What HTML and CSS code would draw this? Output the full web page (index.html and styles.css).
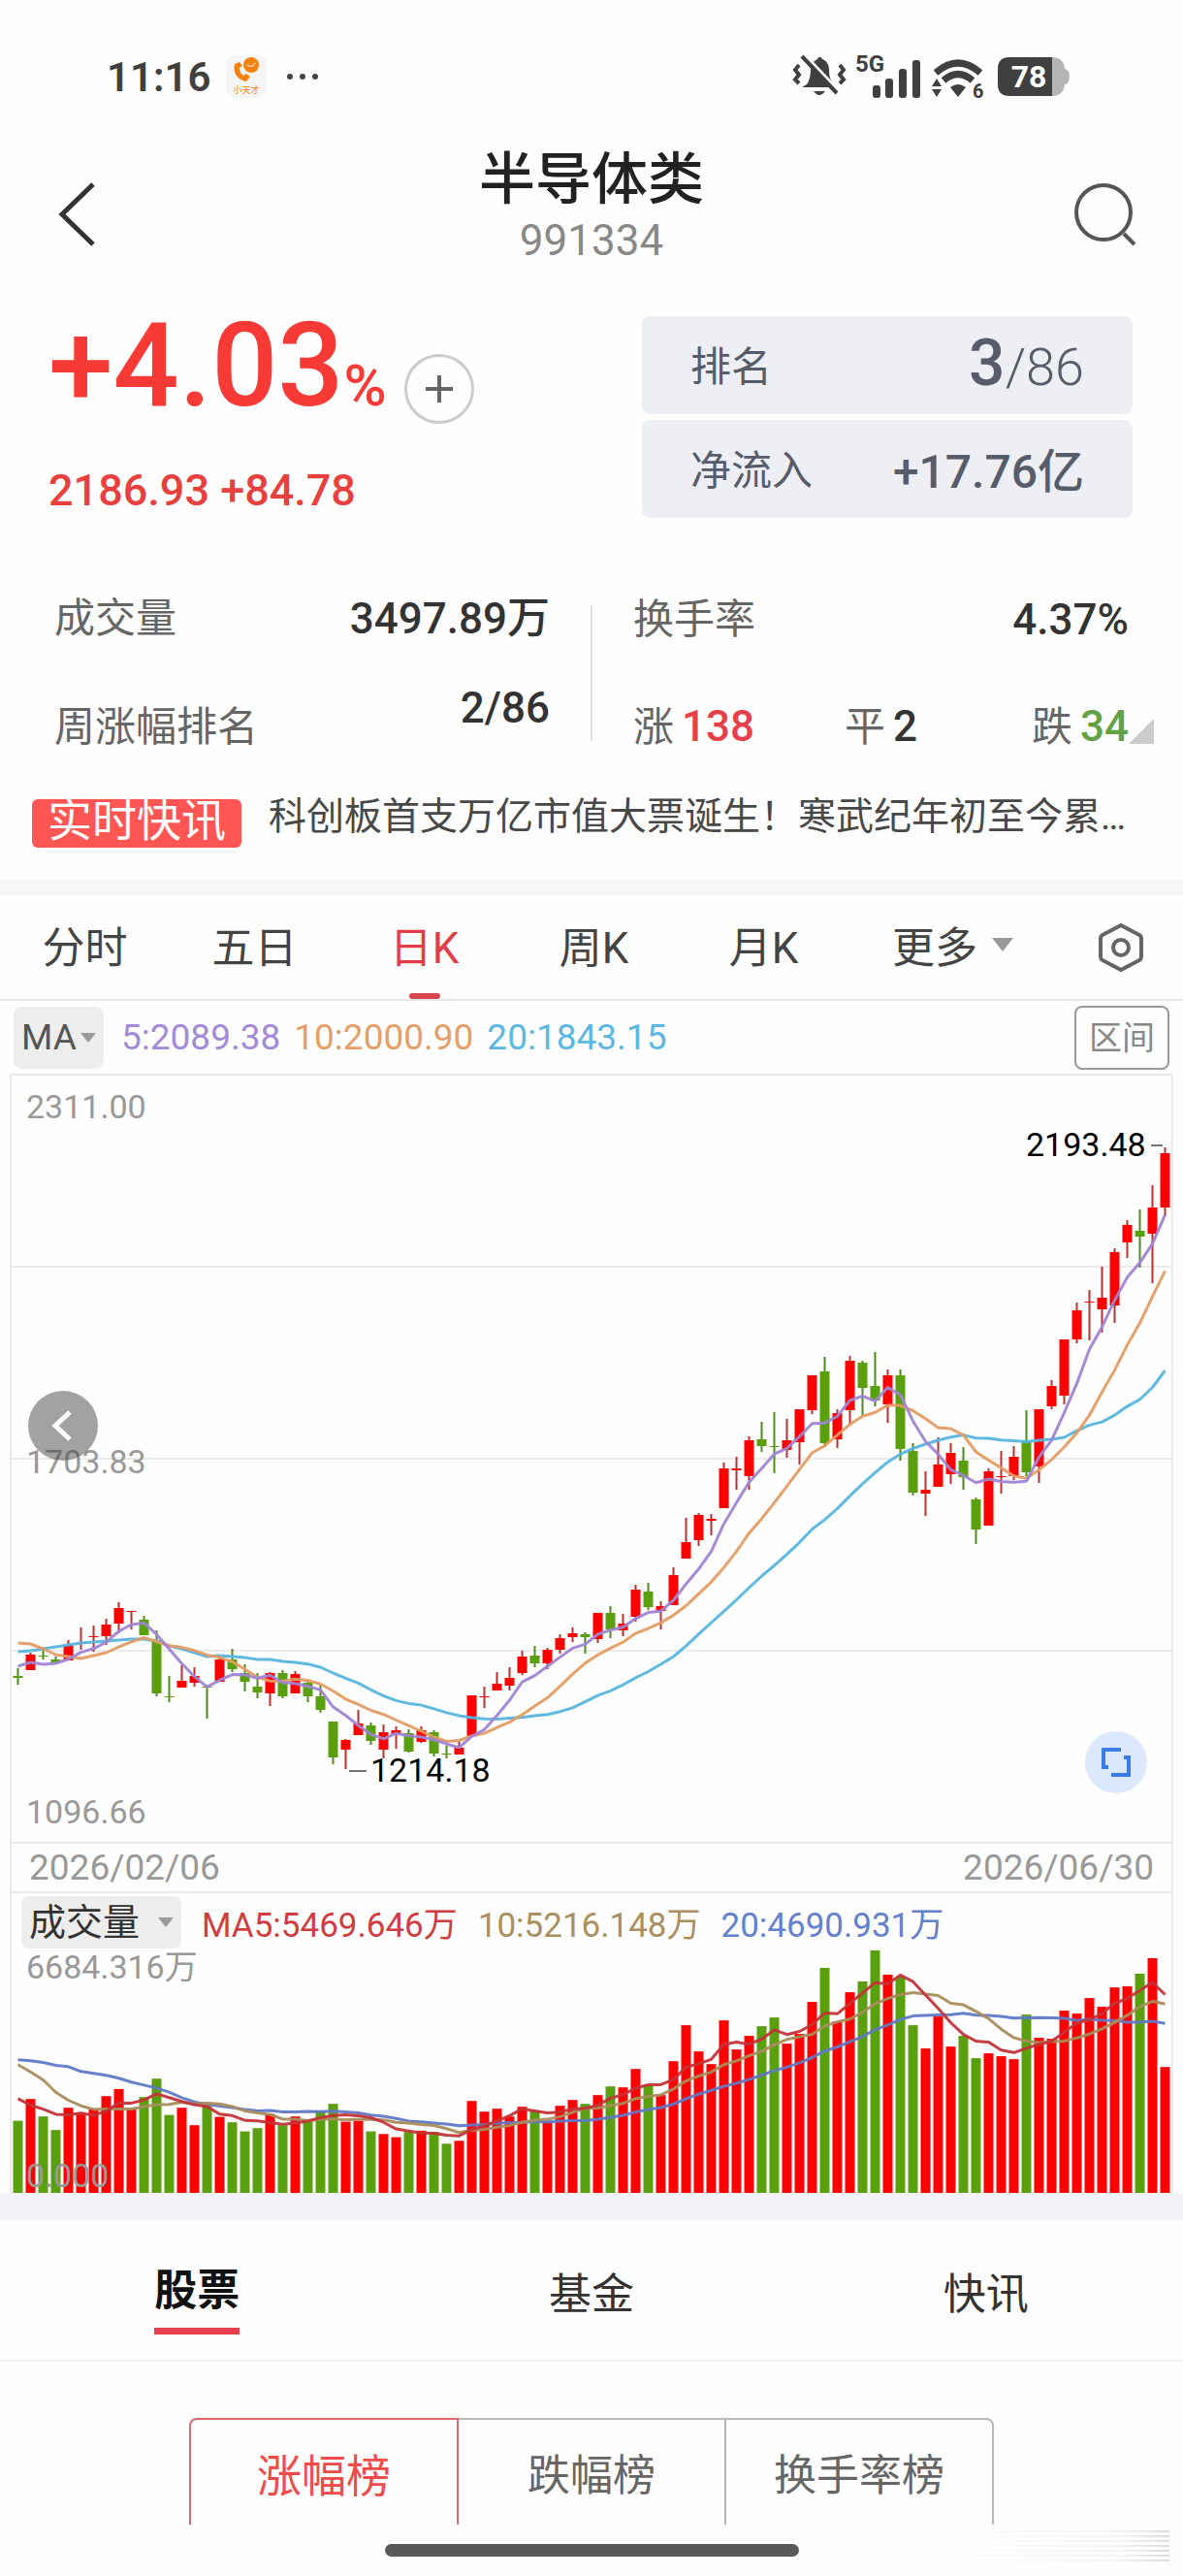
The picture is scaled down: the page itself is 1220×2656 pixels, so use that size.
FILE: index.html
```html
<!DOCTYPE html>
<html lang="zh-CN">
<head>
<meta charset="UTF-8" />
<meta name="viewport" content="width=device-width, initial-scale=1" />
<title>半导体类 991334</title>
<link rel="stylesheet" href="styles.css">
</head>
<body>

<div class="status-bar">
  <span class="clock">11:16</span>
  <svg class="app-icon" width="42" height="44" viewBox="0 0 42 44">
    <rect width="42" height="44" rx="9" fill="#f6f5f5"/>
    <path d="M9 9c-2 9 2 16 12 18l4-5-4-3-3 2c-3-2-4-5-4-8l3-2-3-4z" fill="#f5820f"/>
    <circle cx="26" cy="10" r="8" fill="#f5820f"/>
    <path d="M22 10q5 4 8-2" stroke="#ffd9b0" stroke-width="1.5" fill="none"/>
    <text x="21" y="39" text-anchor="middle" class="app-name">小天才</text>
  </svg>
  <svg width="34" height="8" viewBox="0 0 34 8" fill="#444"><circle cx="4" cy="4" r="3"/><circle cx="17" cy="4" r="3"/><circle cx="30" cy="4" r="3"/></svg>

  <div class="status-right">
    <svg width="54" height="48" viewBox="0 0 54 48">
      <path d="M14 32c5-7 3-13 5-20 1-3 4-5 6-6 1-3 4-3 5 0 5 2 7 6 7 11 0 6 1 10 5 15v3H9z" fill="#404040"/>
      <path d="M21 39h12q-6 8-12 0" fill="#404040"/>
      <path d="M12 3l36 38" stroke="#fff" stroke-width="5"/>
      <path d="M9 3l36 38" stroke="#404040" stroke-width="4"/>
      <path d="M6 12l-4 5 4 5-4 5 4 4M48 12l4 5-4 5 4 5-4 4" fill="none" stroke="#404040" stroke-width="4"/>
    </svg>
    <svg width="68" height="48" viewBox="0 0 68 48" fill="#404040">
      <text x="0" y="19" class="net-type">5G</text>
      <rect x="18" y="33" width="8" height="13" rx="3"/>
      <rect x="31" y="26" width="8" height="20" rx="3"/>
      <rect x="45" y="16" width="8" height="30" rx="3"/>
      <rect x="59" y="7" width="8" height="39" rx="3"/>
    </svg>
    <svg width="58" height="48" viewBox="0 0 58 48">
      <path d="M5 20q23-20 46 0M13 28q15-13 30 0" fill="none" stroke="#404040" stroke-width="7"/>
      <path d="M20 35q8-6 16 0l-8 10zM1 34l5-8 5 8zM1 37l5 8 5-8z" fill="#404040"/>
      <text x="43" y="46" class="wifi-gen">6</text>
    </svg>
    <svg width="76" height="42" viewBox="0 0 76 42">
      <rect x="8" y="1" width="62" height="40" rx="12" fill="#b5b5b5"/>
      <path d="M70 13q5 1 5 8t-5 8z" fill="#b5b5b5"/>
      <path d="M13 1h44v40H13Q1 41 1 29V13Q1 1 13 1z" fill="#404040"/>
      <text x="33" y="32" text-anchor="middle" class="battery-level">78</text>
    </svg>
  </div>
</div>

<header class="header">
  <button class="icon-button" aria-label="返回">
    <svg width="42" height="66" viewBox="0 0 42 66"><path d="M37 2L5 33l32 31" fill="none" stroke="#333" stroke-width="5"/></svg>
  </button>
  <div class="header-title">
    <h1>半导体类</h1>
    <p>991334</p>
  </div>
  <button class="icon-button" aria-label="搜索">
    <svg width="66" height="66" viewBox="0 0 66 66" fill="none" stroke="#555" stroke-width="4"><circle cx="31" cy="31" r="28"/><path d="M52 53l11 11"/></svg>
  </button>
</header>

<section class="quote">
  <div class="quote-main">
    <div class="quote-top">
      <p class="change">+4.03<small>%</small></p>
      <button class="add-button" aria-label="加自选">
        <svg width="30" height="30" viewBox="0 0 30 30"><path d="M15 1v28M1 15h28" stroke="#666" stroke-width="4"/></svg>
      </button>
    </div>
    <p class="points">2186.93 +84.78</p>
  </div>
  <div class="quote-side">
    <div class="side-card"><span>排名</span><span class="rank"><b>3</b>/86</span></div>
    <div class="side-card"><span>净流入</span><span class="inflow">+17.76亿</span></div>
  </div>
</section>

<section class="stats">
  <div class="stats-half">
    <div class="stat-labels"><span>成交量</span><span>周涨幅排名</span></div>
    <div class="stat-values"><span>3497.89万</span><span>2/86</span></div>
  </div>
  <div class="stats-divider"></div>
  <div class="stats-half stats-rows">
    <div class="stat-row"><span>换手率</span><b>4.37%</b></div>
    <div class="stat-counts">
      <span>涨<b class="up">138</b></span>
      <span>平<b>2</b></span>
      <span>跌<b class="down">34</b></span>
      <svg class="corner" width="26" height="26" viewBox="0 0 26 26"><path d="M26 0v26H0z" fill="#ccc"/></svg>
    </div>
  </div>
</section>

<a class="news" href="#news">
  <span class="news-tag">实时快讯</span>
  <span class="news-text">科创板首支万亿市值大票诞生！寒武纪年初至今累…</span>
</a>

<nav class="period-tabs">
  <button>分时</button>
  <button>五日</button>
  <button class="active">日K</button>
  <button>周K</button>
  <button>月K</button>
  <button class="more">更多 <svg width="24" height="16" viewBox="0 0 24 16"><path d="M1 1h22L12 15z" fill="#999"/></svg></button>
  <button class="settings" aria-label="设置">
    <svg width="48" height="52" viewBox="0 0 48 52" fill="none" stroke="#666" stroke-width="4"><path d="M24 3l19 10q2 1 2 4v18q0 3-2 4L24 49 5 39q-2-1-2-4V17q0-3 2-4z"/><circle cx="24" cy="26" r="8"/></svg>
  </button>
</nav>

<div class="ma-bar">
  <label class="picker">
    <select aria-label="主图指标"><option>MA</option></select>
    <svg width="16" height="10" viewBox="0 0 16 10"><path d="M0 0h16L8 10z" fill="#999"/></svg>
  </label>
  <span class="ma5">5:2089.38</span>
  <span class="ma10">10:2000.90</span>
  <span class="ma20">20:1843.15</span>
  <button class="range-button">区间</button>
</div>

<section class="chart">
  <div class="chart-main">
    <svg id="kline" class="plot" viewBox="0 0 1196 790"></svg>
    <button class="prev-button" aria-label="更早">
      <svg width="24" height="34" viewBox="0 0 24 34"><path d="M19 3L4 17l15 14" fill="none" stroke="#fff" stroke-width="5"/></svg>
    </button>
    <button class="expand-button" aria-label="全屏">
      <svg width="34" height="34" viewBox="0 0 34 34" fill="none" stroke="#3a7de8" stroke-width="4"><path d="M22 4H4v18h5M12 30h18V12h-5"/></svg>
    </button>
  </div>
  <div class="dates"><span>2026/02/06</span><span>2026/06/30</span></div>
  <div class="volume-bar">
    <label class="picker picker-dark">
      <select aria-label="副图指标"><option>成交量</option></select>
      <svg width="16" height="10" viewBox="0 0 16 10"><path d="M0 0h16L8 10z" fill="#999"/></svg>
    </label>
    <span class="vma5">MA5:5469.646万</span>
    <span class="vma10">10:5216.148万</span>
    <span class="vma20">20:4690.931万</span>
  </div>
  <svg id="volume" class="plot" viewBox="0 0 1196 250"></svg>
</section>

<nav class="list-tabs">
  <button class="active"><span>股票</span></button>
  <button><span>基金</span></button>
  <button><span>快讯</span></button>
</nav>

<div class="rank-tabs">
  <button class="active">涨幅榜</button>
  <button>跌幅榜</button>
  <button>换手率榜</button>
</div>

<footer class="home-area">
  <div class="home-indicator"></div>
  <div class="watermark"></div>
</footer>

<script src="script.js"></script>
</body>
</html>
```

FILE: styles.css
```css
/* --- Reset & basics --- */
* {
  margin: 0;
  padding: 0;
  box-sizing: border-box;
}
body {
  background: #fefefe;
  color: #333;
  font-family: Roboto, "Noto Sans CJK SC", sans-serif;
}
button, select {
  font: inherit;
  color: inherit;
  background: none;
  border: none;
  cursor: pointer;
}
a {
  color: inherit;
  text-decoration: none;
}
svg {
  flex: none;
  overflow: visible;
}

/* --- Phone status bar --- */
.status-bar {
  display: flex;
  align-items: center;
  height: 158px;
  padding: 0 116px 0 110px;
}
.clock {
  font-size: 42px;
  font-weight: 600;
  color: #404040;
}
.app-icon {
  margin: 0 20px 0 16px;
}
.app-name {
  font-size: 9px;
  fill: #f5820f;
}
.status-right {
  display: flex;
  align-items: center;
  gap: 10px;
  margin-left: auto;
}
.net-type {
  font-size: 24px;
  font-weight: 700;
}
.wifi-gen {
  font-size: 20px;
  font-weight: 700;
  fill: #404040;
}
.battery-level {
  font-size: 32px;
  font-weight: 700;
  fill: #fff;
}

/* --- Header --- */
.header {
  display: flex;
  justify-content: space-between;
  align-items: center;
  padding: 0 47px;
}
.icon-button {
  width: 66px;
  height: 66px;
}
.header-title {
  text-align: center;
}
.header-title h1 {
  font-size: 58px;
  font-weight: 500;
  line-height: 54px;
  color: #222;
}
.header-title p {
  font-size: 44px;
  line-height: 72px;
  color: #888;
}

/* --- Quote --- */
.quote {
  display: flex;
  justify-content: space-between;
  padding: 42px 52px 0 50px;
}
.quote-main {
  display: flex;
  flex-direction: column;
  justify-content: space-between;
  color: #e8403e;
}
.quote-top {
  display: flex;
  align-items: flex-end;
  gap: 18px;
  height: 111px;
}
.change {
  align-self: flex-start;
  font-size: 120px;
  font-weight: 500;
  line-height: 102px;
  color: #f83a36;
}
.change small {
  font-size: 60px;
  line-height: 60px;
}
.add-button {
  display: flex;
  justify-content: center;
  align-items: center;
  width: 72px;
  height: 72px;
  border: 3px solid #ccc;
  border-radius: 50%;
}
.points {
  font-size: 45px;
  font-weight: 500;
  line-height: 56px;
}
.quote-side {
  display: flex;
  flex-direction: column;
  gap: 6px;
  width: 506px;
}
.side-card {
  display: flex;
  justify-content: space-between;
  align-items: center;
  height: 101px;
  padding: 0 50px 4px;
  border-radius: 8px;
  background: #eeeff4;
  color: #565c6a;
  font-size: 42px;
}
.rank {
  font-size: 54px;
  font-weight: 300;
}
.rank b {
  font-size: 66px;
  font-weight: 500;
}
.inflow {
  font-size: 48px;
  font-weight: 500;
}

/* --- Stats --- */
.stats {
  display: flex;
  align-items: center;
  gap: 42px;
  padding: 77px 56px 0;
  font-size: 42px;
  line-height: 54px;
  color: #666;
}
.stats b, .stat-values {
  font-size: 44px;
  font-weight: 500;
  color: #333;
}
.stats-half {
  display: flex;
  flex: 1;
  justify-content: space-between;
}
.stat-labels, .stat-values {
  display: flex;
  flex-direction: column;
  gap: 58px;
}
.stat-values {
  gap: 38px;
  text-align: right;
}
.stats-rows {
  flex-direction: column;
  justify-content: flex-start;
  gap: 56px;
}
.stat-row {
  display: flex;
  justify-content: space-between;
}
.stat-counts {
  display: grid;
  grid-template-columns: repeat(3, 1fr);
  position: relative;
}
.stat-counts b {
  margin-left: 8px;
}
.stat-counts span:nth-child(2) {
  text-align: center;
}
.stat-counts span:nth-child(3) {
  text-align: right;
}
.stats-divider {
  width: 2px;
  height: 140px;
  background: #e2e2e2;
}
.stats .up {
  color: #e8404a;
}
.stats .down {
  color: #62a144;
}
.corner {
  position: absolute;
  left: 100%;
  bottom: 10px;
}

/* --- News line --- */
.news {
  display: flex;
  gap: 28px;
  height: 90px;
  margin-top: 40px;
  padding: 0 33px;
}
.news-tag {
  flex: none;
  height: 50px;
  margin-top: 7px;
  padding: 0 16px;
  border-radius: 6px;
  background: #ff5654;
  color: #fff;
  font-size: 46px;
  line-height: 44px;
}
.news-text {
  font-size: 39px;
  line-height: 50px;
  color: #484848;
  white-space: nowrap;
  overflow: hidden;
}

/* --- Period tabs --- */
.period-tabs {
  display: flex;
  height: 125px;
  border-top: 16px solid #f7f7f7;
  border-bottom: 2px solid #e6e6e6;
  font-size: 44px;
  color: #444;
}
.period-tabs button {
  display: flex;
  flex: 175;
  justify-content: center;
  align-items: center;
  gap: 14px;
  position: relative;
  padding-bottom: 6px;
}
.period-tabs .more {
  flex: 216;
}
.period-tabs .settings {
  flex: 129;
  padding: 0;
}
.period-tabs .active {
  color: #e23c46;
}
.period-tabs .active::after {
  content: "";
  position: absolute;
  left: 50%;
  bottom: 0;
  width: 32px;
  height: 6px;
  margin-left: -16px;
  border-radius: 3px;
  background: #d8474b;
}

/* --- Indicator bar --- */
.ma-bar {
  display: flex;
  align-items: center;
  gap: 14px;
  height: 75px;
  padding: 0 14px;
  font-size: 37px;
}
.picker {
  display: flex;
  align-items: center;
  gap: 4px;
  height: 64px;
  margin-right: 4px;
  padding: 0 8px;
  border-radius: 8px;
  background: #ededed;
  color: #555;
}
.picker select {
  appearance: none;
}
.ma5 { color: #a28bd8; }
.ma10 { color: #e5a06a; }
.ma20 { color: #5cb8e2; }
.range-button {
  width: 98px;
  height: 66px;
  margin-left: auto;
  padding-bottom: 4px;
  border: 2px solid #999;
  border-radius: 8px;
  font-size: 34px;
  color: #888;
}

/* --- Chart --- */
.chart {
  margin: 0 10px;
  border: 2px solid #ebebeb;
  border-bottom: none;
}
.chart-main {
  position: relative;
}
.plot {
  display: block;
  width: 100%;
}
.grid {
  stroke: #ebebeb;
  stroke-width: 2;
}
.axis-text {
  font-size: 34px;
  fill: #999;
}
.mark-text {
  font-size: 34px;
  fill: #000;
}
.mark-line {
  stroke: #777;
  stroke-width: 2;
}
.body-up { fill: #fe0000; }
.body-down { fill: #5a9f0e; }
.wick-up { fill: #b9302f; }
.wick-down { fill: #4e8c1c; }
.line {
  fill: none;
  stroke-width: 3;
  stroke-linejoin: round;
  opacity: 0.95;
}
.line-ma5 { stroke: #a085d4; }
.line-ma10 { stroke: #e59c63; }
.line-ma20 { stroke: #56b5df; }
.line-vma5 { stroke: #c43338; }
.line-vma10 { stroke: #a98d5c; }
.line-vma20 { stroke: #6079c6; }
.prev-button, .expand-button {
  display: flex;
  justify-content: center;
  align-items: center;
  position: absolute;
  border-radius: 50%;
}
.prev-button {
  left: 17px;
  top: 325px;
  width: 72px;
  height: 72px;
  background: rgba(70, 70, 70, 0.5);
}
.expand-button {
  right: 25px;
  bottom: 50px;
  width: 64px;
  height: 64px;
  background: #dce8fc;
}
.dates {
  display: flex;
  justify-content: space-between;
  padding: 0 18px;
  border-top: 2px solid #ebebeb;
  border-bottom: 2px solid #ebebeb;
  font-size: 37px;
  line-height: 49px;
  color: #999;
}
.volume-bar {
  display: flex;
  align-items: center;
  gap: 21px;
  height: 59px;
  padding-left: 10px;
  font-size: 35px;
}
.picker-dark {
  gap: 18px;
  height: 54px;
  margin: 0;
  color: #333;
  font-size: 38px;
}
.vma5 { color: #cf3d42; }
.vma10 { color: #aa9060; }
.vma20 { color: #6580cc; }

/* --- List tabs --- */
.list-tabs {
  display: flex;
  height: 174px;
  border-top: 28px solid #f2f3f7;
  border-bottom: 2px solid #eee;
  font-size: 44px;
}
.list-tabs button {
  flex: 1;
}
.list-tabs span {
  display: inline-block;
  padding: 16px 0 7px;
  line-height: 62px;
}
.list-tabs .active span {
  border-bottom: 7px solid #e83e4e;
  font-weight: 700;
  color: #111;
}

/* --- Ranking switch --- */
.rank-tabs {
  display: flex;
  height: 168px;
  padding: 58px 195px 0;
  font-size: 44px;
  color: #666;
}
.rank-tabs button {
  flex: 1;
  border: 2px solid #b8b8b8;
  border-width: 2px 2px 0 0;
}
.rank-tabs button:last-child {
  border-top-right-radius: 8px;
}
.rank-tabs .active {
  border-color: #dc6a6c;
  border-left-width: 2px;
  border-top-left-radius: 8px;
  font-size: 46px;
  color: #ee4b4b;
}

/* --- Home indicator --- */
.home-area {
  display: flex;
  justify-content: center;
  position: relative;
  height: 53px;
  padding-top: 20px;
}
.home-indicator {
  width: 35%;
  height: 13px;
  border-radius: 7px;
  background: #595959;
}
.watermark {
  position: absolute;
  right: 14px;
  top: 6px;
  width: 240px;
  height: 34px;
  background: repeating-linear-gradient(#ccc 0, #fefefe 3px, #fefefe 5px);
  mask-image: linear-gradient(to right, transparent, rgba(0, 0, 0, 0.3) 80%, #000);
}
```

FILE: script.js
```js
// [up, body top, body bottom, high, low, volume]; prices in plot units from the top
const candles = [
  [0,619,621,611,628,223],[1,597,613,595,613,290],[0,598,599,590,602,236],[0,602,605,599,606,194],
  [1,587,603,582,603,263],[1,585,586,569,592,248],[1,578,579,567,594,259],[1,566,578,560,587,299],
  [1,549,565,543,575,321],[1,552,553,552,571,260],[0,561,577,557,577,296],[0,582,637,572,640,353],
  [0,640,641,619,646,241],[1,624,631,608,631,263],[1,619,626,610,630,209],[0,630,631,630,663,269],
  [1,602,625,600,625,235],[0,602,612,591,615,218],[0,616,625,607,635,190],[0,630,636,616,642,200],
  [1,616,637,615,650,244],[0,616,640,613,642,209],[1,617,637,614,637,236],[0,626,640,623,646,221],
  [0,640,654,628,657,253],[0,666,703,666,710,275],[1,685,695,684,715,220],[1,668,680,654,680,223],
  [0,670,686,667,690,190],[1,677,695,669,704,182],[1,675,679,671,694,172],[0,678,697,674,698,188],
  [1,675,687,671,688,192],[0,677,699,675,702,188],[0,699,700,691,704,152],[1,693,700,686,700,161],
  [1,639,681,639,682,284],[1,640,641,630,652,251],[1,627,634,615,634,260],[1,621,629,610,634,236],
  [1,599,616,593,618,266],[0,598,606,588,610,254],[1,592,606,590,612,221],[1,580,592,576,596,269],
  [1,575,579,569,584,287],[0,576,579,574,596,275],[1,554,581,554,585,302],[0,554,571,547,580,329],
  [1,565,572,555,578,326],[1,530,558,525,563,383],[0,532,548,523,551,332],[1,547,552,542,571,302],
  [1,515,546,507,546,407],[1,481,498,456,498,518],[1,453,479,451,485,437],[1,457,459,452,474,398],
  [1,405,446,399,446,533],[1,405,407,393,427,443],[1,376,413,372,427,485],[0,375,382,357,388,515],
  [0,382,383,347,410,542],[1,376,386,354,394,461],[1,344,378,344,401,491],[1,309,345,309,349,590],
  [0,305,379,290,383,695],[1,348,375,344,384,530],[1,294,345,289,361,620],[0,296,322,294,351,653],
  [0,320,335,285,341,749],[1,309,339,303,358,674],[0,309,385,303,397,668],[0,387,430,379,433,518],
  [1,427,431,408,454,446],[1,401,424,373,424,545],[1,389,411,379,421,452],[0,397,414,383,427,485],
  [0,437,468,435,483,416],[1,408,464,405,464,431],[1,413,414,387,431,422],[1,393,413,382,417,413],
  [0,377,409,345,413,551],[1,344,403,344,420,479],[1,320,341,314,344,476],[1,272,330,272,339,563],
  [1,242,272,234,276,554],[1,233,234,221,273,602],[1,229,241,197,265,575],[1,182,237,178,255,635],
  [1,154,172,149,188,638],[0,160,166,138,198,677],[1,136,163,113,214,725],[1,80,136,74,145,389]
];

const STEP = 13;
const VOLUME_HEIGHT = 250;
const MAX_VOLUME = 749;

const centerX = (i) => i * STEP + 6.5;
const rect = (x, y, w, h, cls) => `<rect x="${x}" y="${y}" width="${w}" height="${h}" class="${cls}"/>`;
const text = (x, y, cls, value) => `<text x="${x}" y="${y}" class="${cls}">${value}</text>`;

// Moving average; "lead" holds the values that need days before the first candle
function average(values, days, lead) {
  return values.map((v, i) => {
    if (i < lead.length) return lead[i];
    const part = values.slice(i - days + 1, i + 1);
    return part.reduce((a, b) => a + b, 0) / days;
  });
}

function line(values, cls) {
  const points = values.map((v, i) => `${centerX(i)},${v.toFixed(1)}`).join(' ');
  return `<polyline points="${points}" class="line ${cls}"/>`;
}

function drawKline() {
  let out = '';
  [197, 395, 593].forEach((y) => {
    out += `<line x1="0" x2="1196" y1="${y}" y2="${y}" class="grid"/>`;
  });
  candles.forEach(([up, top, bottom, high, low], i) => {
    const dir = up ? 'up' : 'down';
    out += rect(centerX(i) - 1, high, 2, low - high, 'wick-' + dir);
    out += rect(centerX(i) - 5, top, 10, bottom - top, 'body-' + dir);
  });

  const closes = candles.map((c) => (c[0] ? c[1] : c[2]));
  out += line(average(closes, 20, [594, 593, 591, 589, 587, 585, 584, 583, 582, 581, 581, 583, 588, 591, 595, 599, 598, 599, 600]), 'line-ma20');
  out += line(average(closes, 10, [585, 586, 591, 597, 599, 601, 598, 595, 589]), 'line-ma10');
  out += line(average(closes, 5, [609, 605, 607, 606]), 'line-ma5');

  out += text(15, 44, 'axis-text', '2311.00');
  out += text(15, 410, 'axis-text', '1703.83');
  out += text(15, 771, 'axis-text', '1096.66');
  out += text(1046, 83, 'mark-text', '2193.48');
  out += text(370, 728, 'mark-text', '1214.18');
  out += '<path d="M1175 72h12M348 717h18" class="mark-line"/>';
  document.getElementById('kline').innerHTML = out;
}

function drawVolume() {
  let out = '';
  const toY = (v) => VOLUME_HEIGHT - (v / MAX_VOLUME) * VOLUME_HEIGHT;
  candles.forEach((c, i) => {
    const y = toY(c[5]);
    out += rect(centerX(i) - 5, y.toFixed(1), 10, (VOLUME_HEIGHT - y).toFixed(1), c[0] ? 'body-up' : 'body-down');
  });

  const volumes = candles.map((c) => c[5]);
  out += line(average(volumes, 20, [411, 408, 403, 394, 390, 375, 369, 363, 354, 342, 333, 324, 311, 294, 281, 274, 268, 264, 258]).map(toY), 'line-vma20');
  out += line(average(volumes, 10, [396, 374, 349, 311, 286, 269, 258, 259, 259]).map(toY), 'line-vma10');
  out += line(average(volumes, 5, [291, 271, 259, 243]).map(toY), 'line-vma5');

  out += text(15, 29, 'axis-text', '6684.316万');
  out += text(15, 244, 'axis-text', '0.000');
  document.getElementById('volume').innerHTML = out;
}

drawKline();
drawVolume();
```
